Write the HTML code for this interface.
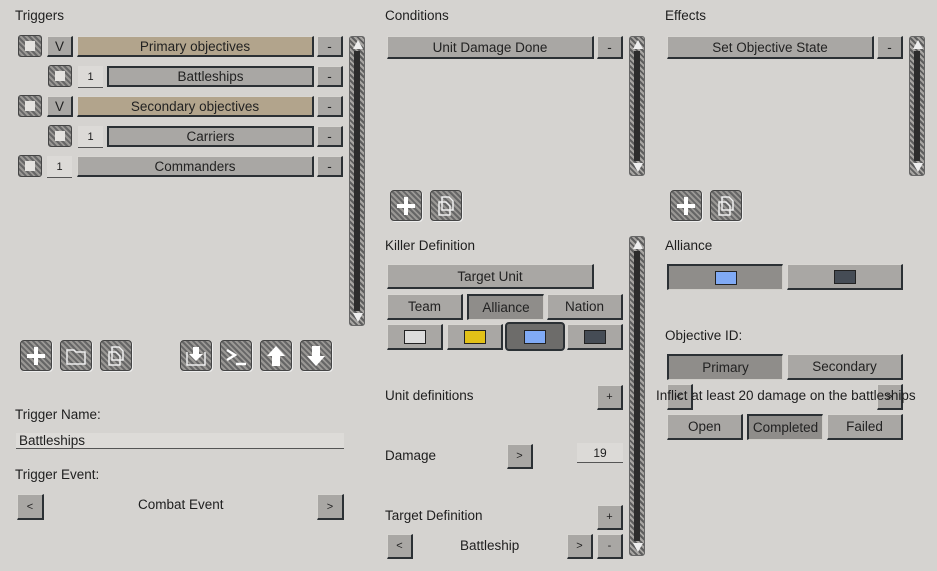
<!DOCTYPE html>
<html><head><meta charset="utf-8"><style>
body{margin:0;width:937px;height:571px;background:#d5d3d0;font-family:"Liberation Sans",sans-serif;font-size:13.5px;color:#1e1e1e;position:relative;overflow:hidden}
.a{position:absolute}
.l{position:absolute;font-size:13.5px}
.b{position:absolute;box-sizing:border-box;background:#a9a7a4;border-top:1px solid #d8d6d2;border-left:1px solid #d8d6d2;border-right:2px solid #2b3034;border-bottom:2px solid #2b3034;display:flex;align-items:center;justify-content:center;font-size:13.5px;color:#222}
.t{background:#b2a48c}
.s{background:#8f8d8a;border-top:2px solid #2b3034;border-left:2px solid #2b3034;border-right:1px solid #d0cec9;border-bottom:1px solid #d0cec9}
.f{position:absolute;box-sizing:border-box;background:#dcdad7;border-bottom:1px solid #555;display:flex;align-items:center;justify-content:center;font-size:11px}
.cb{position:absolute;width:24px;height:22px;box-sizing:border-box;border:1px solid #444;border-radius:3px;background-image:repeating-linear-gradient(45deg,#666 0 2px,#9a9895 2px 4px)}
.cb:after{content:"";position:absolute;left:6px;top:5px;width:10px;height:10px;background:#e4e2df}
.sc{position:absolute;width:16px;box-sizing:border-box;border:1px solid #666;border-radius:3px;background-image:repeating-linear-gradient(45deg,#5e5e5e 0 2px,#a8a6a3 2px 4px)}
.sc i{position:absolute;left:4px;top:14px;bottom:14px;width:6px;background:#2c2c2c}
.sc:before{content:"";position:absolute;left:3px;top:3px;border-left:5px solid transparent;border-right:5px solid transparent;border-bottom:9px solid #eee}
.sc:after{content:"";position:absolute;left:3px;bottom:3px;border-left:5px solid transparent;border-right:5px solid transparent;border-top:9px solid #eee}
.ib{position:absolute;width:32px;height:31px;box-sizing:border-box;border-radius:4px;border:1px solid #444;background-image:repeating-linear-gradient(45deg,#666 0 2px,#9a9895 2px 4px);box-shadow:1px 1px 0 #eee}
.ib svg{position:absolute;left:3px;top:3px}
.sw{width:22px;height:14px;box-sizing:border-box;border:1px solid #222}
</style></head><body>
<div class="l" style="left:15px;top:8px">Triggers</div>
<div class="cb" style="left:18px;top:35px"></div><div class="b" style="left:47px;top:36px;width:26px;height:21px">V</div><div class="b t" style="left:77px;top:36px;width:237px;height:21px">Primary objectives</div><div class="b" style="left:317px;top:36px;width:26px;height:21px">-</div>
<div class="cb" style="left:48px;top:65px"></div><div class="f" style="left:78px;top:66px;width:25px;height:22px">1</div><div class="b" style="left:107px;top:66px;width:207px;height:21px;border-top:2px solid #2b3034;border-left:2px solid #2b3034">Battleships</div><div class="b" style="left:317px;top:66px;width:26px;height:21px">-</div>
<div class="cb" style="left:18px;top:95px"></div><div class="b" style="left:47px;top:96px;width:26px;height:21px">V</div><div class="b t" style="left:77px;top:96px;width:237px;height:21px">Secondary objectives</div><div class="b" style="left:317px;top:96px;width:26px;height:21px">-</div>
<div class="cb" style="left:48px;top:125px"></div><div class="f" style="left:78px;top:126px;width:25px;height:22px">1</div><div class="b" style="left:107px;top:126px;width:207px;height:21px;border-top:2px solid #2b3034;border-left:2px solid #2b3034">Carriers</div><div class="b" style="left:317px;top:126px;width:26px;height:21px">-</div>
<div class="cb" style="left:18px;top:155px"></div><div class="f" style="left:47px;top:156px;width:25px;height:22px">1</div><div class="b" style="left:77px;top:156px;width:237px;height:21px">Commanders</div><div class="b" style="left:317px;top:156px;width:26px;height:21px">-</div>
<div class="sc" style="left:349px;top:36px;height:290px"><i></i></div>
<div class="ib" style="left:20px;top:340px"><svg width="24" height="24"><path d="M12 3v18M3 12h18" stroke="#fff" stroke-width="4"/></svg></div>
<div class="ib" style="left:60px;top:340px"><svg width="24" height="24"><path d="M3 6h7l2 2h9v12H3z" fill="none" stroke="#eee" stroke-width="1.5"/></svg></div>
<div class="ib" style="left:100px;top:340px"><svg width="24" height="24"><path d="M8 3h7l4 4v9H8z M5 8h7l4 4v9H5z" fill="none" stroke="#eee" stroke-width="1.5"/></svg></div>
<div class="ib" style="left:180px;top:340px"><svg width="24" height="24"><path d="M3 8v13h18V8" fill="none" stroke="#eee" stroke-width="1.5"/><path d="M9 3h6v7h4l-7 7-7-7h4z" fill="#fff"/></svg></div>
<div class="ib" style="left:220px;top:340px"><svg width="24" height="24"><path d="M3 6l8 5-8 5M12 20h10" fill="none" stroke="#fff" stroke-width="2.5"/></svg></div>
<div class="ib" style="left:260px;top:340px"><svg width="24" height="24"><path d="M12 2l9 10h-5v10H8V12H3z" fill="#fff"/></svg></div>
<div class="ib" style="left:300px;top:340px"><svg width="24" height="24"><path d="M12 22l9-10h-5V2H8v10H3z" fill="#fff"/></svg></div>
<div class="l" style="left:15px;top:407px">Trigger Name:</div>
<div class="a" style="left:16px;top:433px;width:328px;height:16px;background:#dddbd8;border-bottom:1px solid #555;box-sizing:border-box;padding-left:3px;font-size:13.5px;line-height:15px">Battleships</div>
<div class="l" style="left:15px;top:467px">Trigger Event:</div>
<div class="b" style="left:17px;top:494px;width:27px;height:26px;font-size:11px">&lt;</div>
<div class="l" style="left:138px;top:497px">Combat Event</div>
<div class="b" style="left:317px;top:494px;width:27px;height:26px;font-size:11px">&gt;</div>

<div class="l" style="left:385px;top:8px">Conditions</div>
<div class="b" style="left:387px;top:36px;width:207px;height:23px">Unit Damage Done</div><div class="b" style="left:597px;top:36px;width:26px;height:23px">-</div>
<div class="sc" style="left:629px;top:36px;height:140px"><i></i></div>
<div class="ib" style="left:390px;top:190px"><svg width="24" height="24"><path d="M12 3v18M3 12h18" stroke="#fff" stroke-width="4"/></svg></div>
<div class="ib" style="left:430px;top:190px"><svg width="24" height="24"><path d="M8 3h7l4 4v9H8z M5 8h7l4 4v9H5z" fill="none" stroke="#eee" stroke-width="1.5"/></svg></div>
<div class="l" style="left:385px;top:238px">Killer Definition</div>
<div class="b" style="left:387px;top:264px;width:207px;height:25px">Target Unit</div>
<div class="b" style="left:387px;top:294px;width:76px;height:26px">Team</div>
<div class="b s" style="left:467px;top:294px;width:77px;height:26px">Alliance</div>
<div class="b" style="left:547px;top:294px;width:76px;height:26px">Nation</div>
<div class="b" style="left:387px;top:324px;width:56px;height:26px"><div class="sw" style="background:#dcdcdc"></div></div>
<div class="b" style="left:447px;top:324px;width:56px;height:26px"><div class="sw" style="background:#e2c117"></div></div>
<div class="b" style="left:505px;top:322px;width:60px;height:29px;background:#6d6c6a;border:2px solid #2b3034;border-radius:4px"><div class="sw" style="background:#80aaf5"></div></div>
<div class="b" style="left:567px;top:324px;width:56px;height:26px"><div class="sw" style="background:#454c55"></div></div>
<div class="l" style="left:385px;top:388px">Unit definitions</div>
<div class="b" style="left:597px;top:385px;width:26px;height:25px;font-size:11px">+</div>
<div class="l" style="left:385px;top:448px">Damage</div>
<div class="b" style="left:507px;top:444px;width:26px;height:25px;font-size:11px">&gt;</div>
<div class="f" style="left:577px;top:443px;width:46px;height:20px;font-size:12px">19</div>
<div class="l" style="left:385px;top:508px">Target Definition</div>
<div class="b" style="left:597px;top:505px;width:26px;height:25px;font-size:11px">+</div>
<div class="b" style="left:387px;top:534px;width:26px;height:25px;font-size:11px">&lt;</div>
<div class="l" style="left:460px;top:538px">Battleship</div>
<div class="b" style="left:567px;top:534px;width:26px;height:25px;font-size:11px">&gt;</div>
<div class="b" style="left:597px;top:534px;width:26px;height:25px;font-size:11px">-</div>
<div class="sc" style="left:629px;top:236px;height:320px"><i></i></div>

<div class="l" style="left:665px;top:8px">Effects</div>
<div class="b" style="left:667px;top:36px;width:207px;height:23px">Set Objective State</div><div class="b" style="left:877px;top:36px;width:26px;height:23px">-</div>
<div class="sc" style="left:909px;top:36px;height:140px"><i></i></div>
<div class="ib" style="left:670px;top:190px"><svg width="24" height="24"><path d="M12 3v18M3 12h18" stroke="#fff" stroke-width="4"/></svg></div>
<div class="ib" style="left:710px;top:190px"><svg width="24" height="24"><path d="M8 3h7l4 4v9H8z M5 8h7l4 4v9H5z" fill="none" stroke="#eee" stroke-width="1.5"/></svg></div>
<div class="l" style="left:665px;top:238px">Alliance</div>
<div class="b s" style="left:667px;top:264px;width:116px;height:26px"><div class="sw" style="background:#80aaf5"></div></div>
<div class="b" style="left:787px;top:264px;width:116px;height:26px"><div class="sw" style="background:#454c55"></div></div>
<div class="l" style="left:665px;top:328px">Objective ID:</div>
<div class="b s" style="left:667px;top:354px;width:116px;height:26px">Primary</div>
<div class="b" style="left:787px;top:354px;width:116px;height:26px">Secondary</div>
<div class="b" style="left:667px;top:384px;width:26px;height:26px;font-size:11px">&lt;</div>
<div class="b" style="left:877px;top:384px;width:26px;height:26px;font-size:11px">&gt;</div>
<div class="l" style="left:656px;top:388px;white-space:nowrap">Inflict at least 20 damage on the battleships</div>
<div class="b" style="left:667px;top:414px;width:76px;height:26px">Open</div>
<div class="b s" style="left:747px;top:414px;width:76px;height:26px">Completed</div>
<div class="b" style="left:827px;top:414px;width:76px;height:26px">Failed</div>
</body></html>
